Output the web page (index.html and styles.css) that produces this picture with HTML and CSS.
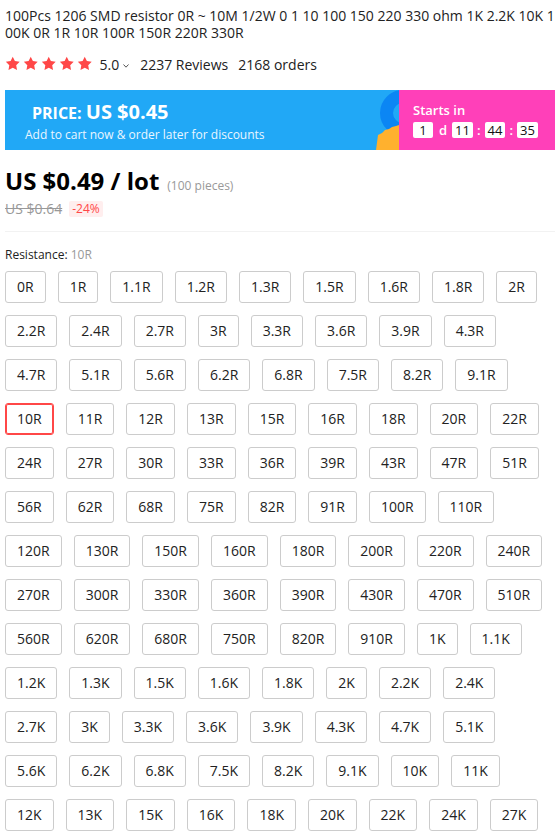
FILE: index.html
```html
<!DOCTYPE html>
<html>
<head>
<meta charset="utf-8">
<link rel="stylesheet" href="styles.css">
</head>
<body>
<div class="page">
  <h1 class="title">100Pcs 1206 SMD resistor 0R ~ 10M 1/2W 0 1 10 100 150 220 330 ohm 1K 2.2K 10K 100K 0R 1R 10R 100R 150R 220R 330R</h1>

  <div class="rating">
    <div class="stars">
      <svg viewBox="0 0 24 24"><path d="M12 1.2l3.3 6.7 7.4 1.1-5.35 5.2 1.26 7.35L12 18.1l-6.6 3.45 1.26-7.35L1.3 9l7.4-1.1z"/></svg>
      <svg viewBox="0 0 24 24"><path d="M12 1.2l3.3 6.7 7.4 1.1-5.35 5.2 1.26 7.35L12 18.1l-6.6 3.45 1.26-7.35L1.3 9l7.4-1.1z"/></svg>
      <svg viewBox="0 0 24 24"><path d="M12 1.2l3.3 6.7 7.4 1.1-5.35 5.2 1.26 7.35L12 18.1l-6.6 3.45 1.26-7.35L1.3 9l7.4-1.1z"/></svg>
      <svg viewBox="0 0 24 24"><path d="M12 1.2l3.3 6.7 7.4 1.1-5.35 5.2 1.26 7.35L12 18.1l-6.6 3.45 1.26-7.35L1.3 9l7.4-1.1z"/></svg>
      <svg viewBox="0 0 24 24"><path d="M12 1.2l3.3 6.7 7.4 1.1-5.35 5.2 1.26 7.35L12 18.1l-6.6 3.45 1.26-7.35L1.3 9l7.4-1.1z"/></svg>
    </div>
    <span class="score">5.0</span>
    <svg class="chev" viewBox="0 0 6 4"><path d="M0.5 0.5L3 3.2L5.5 0.5"/></svg>
    <span class="reviews">2237 Reviews</span>
    <span class="orders">2168 orders</span>
  </div>

  <div class="banner">
    <div class="banner-price">
      <div class="price-line"><span class="price-label">PRICE:</span> <span class="price-value">US $0.45</span></div>
      <div class="price-sub">Add to cart now &amp; order later for discounts</div>
      <svg class="deco" viewBox="0 0 26 60" width="26" height="60">
        <circle cx="30" cy="23" r="16.5" fill="none" stroke="#0b86f4" stroke-width="13"/>
        <path d="M3 60 L5 45 L9 43 L12 40 L16 39 L19 37 L23 36 L26 35 L26 60 Z" fill="#ffb12e"/>
      </svg>
    </div>
    <div class="banner-timer">
      <div class="starts">Starts in</div>
      <div class="countdown">
        <span class="tbox">1</span><span class="tsep d">d</span><span class="tbox">11</span><span class="tsep">:</span><span class="tbox">44</span><span class="tsep">:</span><span class="tbox">35</span>
      </div>
    </div>
  </div>

  <div class="price-main"><span class="amount">US $0.49 / lot</span><span class="pieces">(100 pieces)</span></div>
  <div class="price-old"><span class="old">US $0.64</span><span class="discount">-24%</span></div>

  <div class="divider"></div>

  <div class="prop-label">Resistance: <span class="prop-value">10R</span></div>

  <div class="options">
    <span class="opt">0R</span><span class="opt">1R</span><span class="opt">1.1R</span><span class="opt">1.2R</span><span class="opt">1.3R</span><span class="opt">1.5R</span><span class="opt">1.6R</span><span class="opt">1.8R</span><span class="opt">2R</span>
    <span class="opt">2.2R</span><span class="opt">2.4R</span><span class="opt">2.7R</span><span class="opt">3R</span><span class="opt">3.3R</span><span class="opt">3.6R</span><span class="opt">3.9R</span><span class="opt">4.3R</span>
    <span class="opt">4.7R</span><span class="opt">5.1R</span><span class="opt">5.6R</span><span class="opt">6.2R</span><span class="opt">6.8R</span><span class="opt">7.5R</span><span class="opt">8.2R</span><span class="opt">9.1R</span>
    <span class="opt selected">10R</span><span class="opt">11R</span><span class="opt">12R</span><span class="opt">13R</span><span class="opt">15R</span><span class="opt">16R</span><span class="opt">18R</span><span class="opt">20R</span><span class="opt">22R</span>
    <span class="opt">24R</span><span class="opt">27R</span><span class="opt">30R</span><span class="opt">33R</span><span class="opt">36R</span><span class="opt">39R</span><span class="opt">43R</span><span class="opt">47R</span><span class="opt">51R</span>
    <span class="opt">56R</span><span class="opt">62R</span><span class="opt">68R</span><span class="opt">75R</span><span class="opt">82R</span><span class="opt">91R</span><span class="opt">100R</span><span class="opt">110R</span>
    <span class="opt">120R</span><span class="opt">130R</span><span class="opt">150R</span><span class="opt">160R</span><span class="opt">180R</span><span class="opt">200R</span><span class="opt">220R</span><span class="opt">240R</span>
    <span class="opt">270R</span><span class="opt">300R</span><span class="opt">330R</span><span class="opt">360R</span><span class="opt">390R</span><span class="opt">430R</span><span class="opt">470R</span><span class="opt">510R</span>
    <span class="opt">560R</span><span class="opt">620R</span><span class="opt">680R</span><span class="opt">750R</span><span class="opt">820R</span><span class="opt">910R</span><span class="opt">1K</span><span class="opt">1.1K</span>
    <span class="opt">1.2K</span><span class="opt">1.3K</span><span class="opt">1.5K</span><span class="opt">1.6K</span><span class="opt">1.8K</span><span class="opt">2K</span><span class="opt">2.2K</span><span class="opt">2.4K</span>
    <span class="opt">2.7K</span><span class="opt">3K</span><span class="opt">3.3K</span><span class="opt">3.6K</span><span class="opt">3.9K</span><span class="opt">4.3K</span><span class="opt">4.7K</span><span class="opt">5.1K</span>
    <span class="opt">5.6K</span><span class="opt">6.2K</span><span class="opt">6.8K</span><span class="opt">7.5K</span><span class="opt">8.2K</span><span class="opt">9.1K</span><span class="opt">10K</span><span class="opt">11K</span>
    <span class="opt">12K</span><span class="opt">13K</span><span class="opt">15K</span><span class="opt">16K</span><span class="opt">18K</span><span class="opt">20K</span><span class="opt">22K</span><span class="opt">24K</span><span class="opt">27K</span>
  </div>
</div>
</body>
</html>
```

FILE: styles.css
```css
* { box-sizing: border-box; }
html, body { margin: 0; padding: 0; background: #fff; }
body {
  font-family: "Open Sans", "Noto Sans", sans-serif;
  color: #222;
  overflow: hidden;
}
.page {
  width: 559px;
  padding: 7px 4px 0 5px;
}
.title {
  margin: 0;
  font-size: 14px;
  font-weight: 400;
  line-height: 17px;
  color: #222;
  word-break: break-all;
}
.rating {
  display: flex;
  align-items: center;
  height: 22px;
  margin-top: 12px;
  font-size: 14px;
  color: #222;
}
.stars { display: flex; gap: 2.5px; }
.stars svg { width: 15.5px; height: 15.5px; fill: #ff4747; display: block; }
.score { margin-left: 7px; }
.chev { width: 6px; height: 4px; margin-left: 4px; margin-top: 3px; fill: none; stroke: #555; stroke-width: 1; }
.reviews { margin-left: 11px; }
.orders { margin-left: 10px; }

.banner {
  display: flex;
  height: 60px;
  margin-top: 15px;
}
.banner-price {
  position: relative;
  width: 394px;
  background: #21a8f6;
  color: #fff;
  padding: 10px 0 0 20px;
}
.price-line { line-height: 24px; padding-left: 7px; white-space: nowrap; }
.price-label { font-size: 16px; font-weight: 700; }
.price-value { font-size: 20px; font-weight: 700; }
.price-sub { font-size: 12px; line-height: 16px; margin-top: 2px; color: #eaf6ff; }
.deco { position: absolute; right: 0; top: 0; display: block; }
.banner-timer {
  flex: 1;
  background: #ff40b9;
  color: #fff;
  padding: 12px 0 0 14px;
}
.starts { font-size: 13px; font-weight: 600; line-height: 16px; }
.countdown { display: flex; align-items: center; margin-top: 4px; font-size: 13px; line-height: 16px; }
.tbox {
  display: inline-block;
  min-width: 20px;
  height: 16px;
  padding: 0 3px;
  background: #fff;
  color: #111;
  border-radius: 2px;
  text-align: center;
}
.tsep { margin: 0 4px; font-weight: 600; }
.tsep.d { margin: 0 5px 0 6px; }

.price-main {
  display: flex;
  align-items: baseline;
  height: 30px;
  margin-top: 16px;
  white-space: nowrap;
}
.amount { font-size: 24px; font-weight: 700; color: #000; line-height: 30px; }
.pieces { font-size: 12px; color: #999; margin-left: 8px; line-height: 16px; }
.price-old {
  display: flex;
  align-items: center;
  height: 20px;
  margin-top: 3px;
}
.old { font-size: 14px; color: #999; text-decoration: line-through; line-height: 20px; }
.discount {
  margin-left: 7px;
  background: #ffeeee;
  color: #ff4747;
  font-size: 12px;
  line-height: 16px;
  padding: 0 3px;
  border-radius: 2px;
}
.divider {
  height: 1px;
  background: #f2f2f2;
  margin-top: 12px;
}
.prop-label {
  margin-top: 15px;
  font-size: 12px;
  line-height: 16px;
  color: #222;
}
.prop-value { color: #999; }
.options {
  display: flex;
  flex-wrap: wrap;
  gap: 12px;
  margin-top: 8px;
}
.opt {
  height: 32px;
  padding: 0 11px;
  border: 1px solid #ccc;
  border-radius: 3px;
  font-size: 14px;
  line-height: 30px;
  color: #222;
  white-space: nowrap;
}
.opt.selected {
  border-color: #ff4747;
  box-shadow: inset 0 0 0 1px #ff4747;
}
```
